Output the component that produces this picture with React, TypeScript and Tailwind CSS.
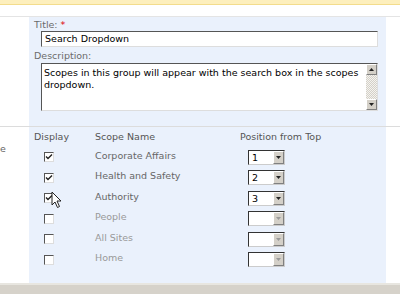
import React from "react";

const font = { fontFamily: '"DejaVu Sans", Verdana, sans-serif' };

function Check({ checked }: { checked: boolean }) {
  return (
    <div className="w-[10px] h-[10px] bg-white border-t border-l border-t-[#555] border-l-[#555] border-b border-r border-b-[#ddd] border-r-[#ddd] relative">
      {checked && (
        <svg width="8" height="8" viewBox="0 0 8 8" className="absolute left-0 top-0">
          <path d="M1 3.5 L3 5.5 L7 1.5" stroke="#222" strokeWidth="1.4" fill="none" />
        </svg>
      )}
    </div>
  );
}

function Select({ value, disabled }: { value?: string; disabled?: boolean }) {
  return (
    <div className="w-[37px] h-[15px] flex bg-white border-t border-l border-t-[#333] border-l-[#333] border-b border-r border-b-[#ccc] border-r-[#ccc]">
      <div className="flex-1 text-[9.5px] leading-[13px] pl-[3px] text-black">{value}</div>
      <div className="w-[11px] h-[13px] bg-[#d4d0c8] border-t border-l border-t-white border-l-white border-b border-r border-b-[#808080] border-r-[#808080] flex items-center justify-center">
        <svg width="5" height="3" viewBox="0 0 5 3">
          <path d="M0 0 H5 L2.5 3 Z" fill={disabled ? "#999" : "#222"} />
        </svg>
      </div>
    </div>
  );
}

const rows = [
  { name: "Corporate Affairs", checked: true, pos: "1" },
  { name: "Health and Safety", checked: true, pos: "2" },
  { name: "Authority", checked: true, pos: "3" },
  { name: "People", checked: false },
  { name: "All Sites", checked: false },
  { name: "Home", checked: false },
];

export default function App() {
  return (
    <div className="w-[400px] h-[294px] bg-white overflow-hidden relative flex flex-col" style={font}>
      <div className="h-[5px] bg-[#fdefbd] border-b border-b-[#f3dc8c]" />
      <div className="h-[11px]" />
      {/* section 1 */}
      <div className="flex border-t border-t-[#e4e4e4] h-[110px]">
        <div className="w-[29px] shrink-0" />
        <div className="w-[357px] shrink-0 bg-[#eaf1fc] pl-[5px] pt-[1px] flex flex-col">
          <div className="text-[9.5px] leading-[13px] text-[#6b6b6b]">
            Title: <span className="text-[#d00]">*</span>
          </div>
          <div className="ml-[7px] w-[337px] h-[16px] bg-white border-t border-l border-t-[#555] border-l-[#555] border-b border-r border-b-[#ddd] border-r-[#ddd] text-[9.5px] leading-[14px] pl-[3px] text-black">
            Search Dropdown
          </div>
          <div className="text-[9.5px] leading-[13px] text-[#6b6b6b] mt-[2px]">Description:</div>
          <div className="ml-[7px] mt-[1px] w-[337px] h-[48px] bg-white border-t border-l border-t-[#555] border-l-[#555] border-b border-r border-b-[#ddd] border-r-[#ddd] flex">
            <div className="flex-1 text-[9.5px] leading-[12px] pl-[2px] pt-[3px] text-black">
              Scopes in this group will appear with the search box in the scopes dropdown.
            </div>
            <div className="w-[11px] flex flex-col bg-[repeating-conic-gradient(#d4d0c8_0_25%,#f4f3ef_0_50%)] bg-[length:2px_2px]">
              <div className="w-[11px] h-[11px] bg-[#d4d0c8] border-t border-l border-t-white border-l-white border-b border-r border-b-[#808080] border-r-[#808080] flex items-center justify-center">
                <svg width="5" height="3" viewBox="0 0 5 3"><path d="M0 3 H5 L2.5 0 Z" fill="#222" /></svg>
              </div>
              <div className="flex-1" />
              <div className="w-[11px] h-[11px] bg-[#d4d0c8] border-t border-l border-t-white border-l-white border-b border-r border-b-[#808080] border-r-[#808080] flex items-center justify-center">
                <svg width="5" height="3" viewBox="0 0 5 3"><path d="M0 0 H5 L2.5 3 Z" fill="#222" /></svg>
              </div>
            </div>
          </div>
        </div>
      </div>
      {/* section 2 */}
      <div className="flex border-t border-t-[#dcdcdc] h-[157px]">
        <div className="w-[29px] shrink-0 text-[9.5px] text-[#666] pt-[16px] leading-[12px]">e</div>
        <div className="w-[357px] shrink-0 bg-[#eaf1fc] pl-[5px] pt-[3px] flex flex-col">
          <div className="flex text-[9.5px] leading-[13px] text-[#555]">
            <div className="w-[61px]">Display</div>
            <div className="w-[145px]">Scope Name</div>
            <div>Position from Top</div>
          </div>
          <div className="flex flex-col mt-[4px]">
            {rows.map((r) => (
              <div key={r.name} className="flex items-center h-[20.5px]">
                <div className="w-[61px] pl-[10px]">
                  <Check checked={r.checked} />
                </div>
                <div className={"w-[153px] text-[9.5px] leading-[13px] -mt-[4px] " + (r.checked ? "text-[#666]" : "text-[#999]")}>
                  {r.name}
                </div>
                <Select value={r.pos} disabled={!r.checked} />
              </div>
            ))}
          </div>
        </div>
      </div>
      <div className="flex-1 bg-[#d6d2ca] border-t-2 border-t-[#e8e6e0]" />
      <svg width="12" height="18" viewBox="0 0 12 18" className="absolute left-[51px] top-[191px]">
        <path d="M1 1 L1 14 L4 11 L6.5 16.5 L8.5 15.5 L6 10 L10 10 Z" fill="white" stroke="#222" strokeWidth="1" />
      </svg>
    </div>
  );
}
